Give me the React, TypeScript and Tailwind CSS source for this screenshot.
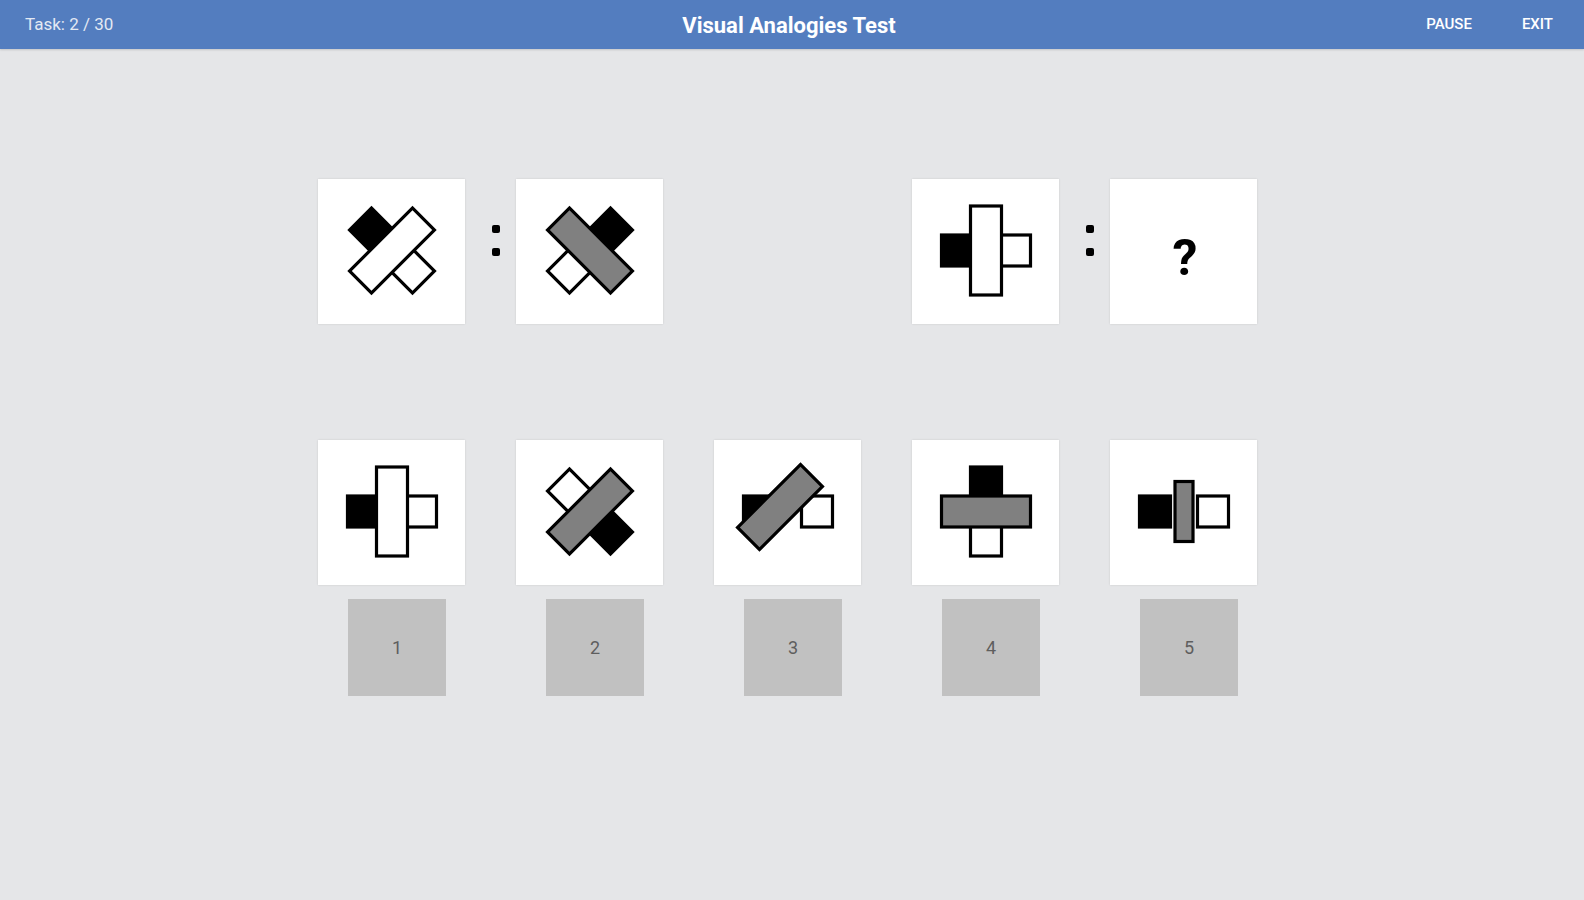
import React from "react";

type FrontKind = "white" | "gray" | "narrow";

function Figure({
  rotate = 0,
  front = "white",
  frontOffset,
}: {
  rotate?: number;
  front?: FrontKind;
  frontOffset?: { dx: number; dy: number; rot: number };
}) {
  const frontRect =
    front === "narrow" ? (
      <rect x={-9} y={-30} width={18} height={60} fill="#808080" stroke="#000" strokeWidth={3.2} />
    ) : (
      <rect
        x={-15.5}
        y={-44.5}
        width={31}
        height={89}
        fill={front === "gray" ? "#808080" : "#fff"}
        stroke="#000"
        strokeWidth={3.2}
      />
    );
  return (
    <svg width="147" height="145" viewBox="0 0 147 145" className="block">
      <g transform={`translate(74 71.5) rotate(${rotate})`}>
        <rect x={-44.5} y={-15.5} width={31} height={31} fill="#000" stroke="#000" strokeWidth={3.2} />
        <rect x={13.5} y={-15.5} width={31} height={31} fill="#fff" stroke="#000" strokeWidth={3.2} />
        {frontOffset ? (
          <g transform={`translate(${frontOffset.dx} ${frontOffset.dy}) rotate(${frontOffset.rot})`}>
            {frontRect}
          </g>
        ) : (
          frontRect
        )}
      </g>
    </svg>
  );
}

function Card({ children }: { children?: React.ReactNode }) {
  return (
    <div className="w-[147px] h-[145px] bg-white shadow-[0_0_2px_rgba(0,0,0,0.12)] flex items-center justify-center shrink-0">
      {children}
    </div>
  );
}

function Colon() {
  return (
    <div className="w-[51px] shrink-0 flex flex-col items-center pl-[11px] pt-[46px] gap-[15px]">
      <div className="w-[8px] h-[8px] bg-black rounded-[2px]" />
      <div className="w-[8px] h-[8px] bg-black rounded-[2px]" />
    </div>
  );
}

function Spacer() {
  return <div className="w-[51px] shrink-0" />;
}

function Option({ n, children }: { n: number; children: React.ReactNode }) {
  return (
    <div className="w-[147px] shrink-0 flex flex-col items-start">
      <Card>{children}</Card>
      <button className="mt-[14px] ml-[30px] w-[98px] h-[97px] bg-[#c1c1c1] flex items-center justify-center text-[18px] text-[#5e5e5e]">
        {n}
      </button>
    </div>
  );
}

export default function App() {
  return (
    <div
      className="w-[1584px] h-[900px] bg-[#e5e6e8] overflow-hidden"
      style={{ fontFamily: "Roboto, 'Liberation Sans', sans-serif" }}
    >
      <header className="h-[49px] bg-[#537dbf] shadow-[0_1px_2px_rgba(0,0,0,0.15)] flex items-center pl-[25px] pr-[31px] text-white">
        <div className="text-[17px] text-[#e3e9f3] w-[300px]">Task: 2 / 30</div>
        <div className="flex-1 text-center text-[22px] font-bold pt-[1px]">
          Visual Analogies Test
        </div>
        <div className="w-[300px] flex justify-end items-center gap-[50px] text-[15px] font-medium">
          <span>PAUSE</span>
          <span>EXIT</span>
        </div>
      </header>

      <div className="pl-[318px] pt-[130px]">
        <div className="flex">
          <Card>
            <Figure rotate={45} front="white" />
          </Card>
          <Colon />
          <Card>
            <Figure rotate={135} front="gray" />
          </Card>
          <Spacer />
          <div className="w-[147px] shrink-0" />
          <Spacer />
          <Card>
            <Figure rotate={0} front="white" />
          </Card>
          <Colon />
          <Card>
            <div className="pt-[12px] pl-[3px] text-[50px] leading-none font-bold text-black">?</div>
          </Card>
        </div>

        <div className="flex gap-[51px] mt-[116px]">
          <Option n={1}>
            <Figure rotate={0} front="white" />
          </Option>
          <Option n={2}>
            <Figure rotate={225} front="gray" />
          </Option>
          <Option n={3}>
            <Figure rotate={0} front="gray" frontOffset={{ dx: -8, dy: -4.5, rot: 45 }} />
          </Option>
          <Option n={4}>
            <Figure rotate={90} front="gray" />
          </Option>
          <Option n={5}>
            <Figure rotate={0} front="narrow" />
          </Option>
        </div>
      </div>
    </div>
  );
}
